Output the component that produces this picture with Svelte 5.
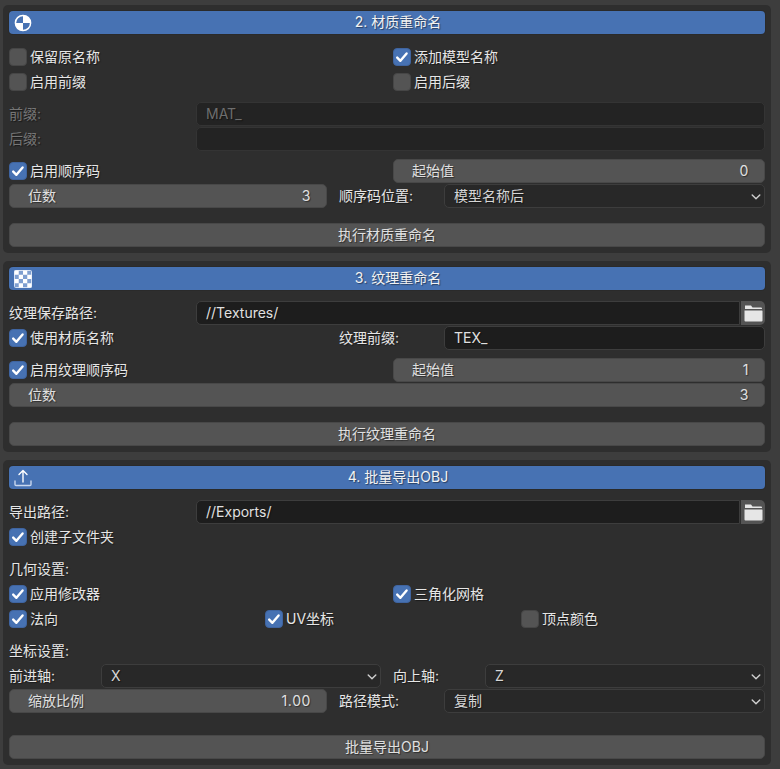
<script>
  const folderPath = "M3 1.5h6l1.5 2H19a1 1 0 0 1 1 1V5H3z M2.5 6.5H20a.5.5 0 0 1 .5.5v9.5a1 1 0 0 1-1 1h-16a1 1 0 0 1-1-1z";
  const checkerCells = [];
  for (let r = 0; r < 4; r++) {
    for (let c = 0; c < 4; c++) {
      if ((r + c) % 2 === 0) checkerCells.push({ x: 1.5 + c * 4.25, y: 1.5 + r * 4.25 });
    }
  }
</script>

{#snippet check(label, on = false)}
  <div class="check">
    <span class="box" class:on>
      {#if on}
        <svg width="18" height="18" viewBox="0 0 18 18"><path d="M4.2 9.6l3.2 3.2 6.2-7.4" fill="none" stroke="#fff" stroke-width="2.4" stroke-linecap="round" stroke-linejoin="round" /></svg>
      {/if}
    </span>
    <span>{label}</span>
  </div>
{/snippet}

{#snippet slider(label, value)}
  <div class="slider"><span>{label}</span><span class="value">{value}</span></div>
{/snippet}

{#snippet select(value)}
  <div class="select">
    <span>{value}</span>
    <svg width="10" height="6" viewBox="0 0 10 6"><path d="M1.2 1l3.8 3.8L8.8 1" fill="none" stroke="#d0d0d0" stroke-width="1.4" stroke-linecap="round" stroke-linejoin="round" /></svg>
  </div>
{/snippet}

{#snippet pathField(label, value)}
  <div class="row path-row">
    <span class="lbl">{label}</span>
    <div class="input path-input">{value}</div>
    <div class="folder">
      <svg width="22" height="18" viewBox="0 0 22 18"><path d={folderPath} fill="#e6e6e6" /></svg>
    </div>
  </div>
{/snippet}

<div class="page">
  <section class="panel">
    <div class="header">
      <svg class="icon" width="20" height="20" viewBox="0 0 20 20">
        <circle cx="10" cy="10" r="7.6" fill="none" stroke="#fff" stroke-width="1.5" />
        <path d="M10 2.4a7.6 7.6 0 0 1 7.6 7.6H10z M10 10v7.6A7.6 7.6 0 0 1 2.4 10z" fill="#fff" />
      </svg>
      <span>2. 材质重命名</span>
    </div>
    <div class="group first">
      <div class="row two">
        {@render check("保留原名称")}
        {@render check("添加模型名称", true)}
      </div>
      <div class="row two">
        {@render check("启用前缀")}
        {@render check("启用后缀")}
      </div>
    </div>
    <div class="group">
      <div class="row field-row">
        <span class="lbl faded">前缀:</span>
        <div class="input off">MAT_</div>
      </div>
      <div class="row field-row">
        <span class="lbl faded">后缀:</span>
        <div class="input off"></div>
      </div>
    </div>
    <div class="group">
      <div class="row two">
        {@render check("启用顺序码", true)}
        {@render slider("起始值", "0")}
      </div>
      <div class="row split">
        {@render slider("位数", "3")}
        <div class="labelled">
          <span class="lbl">顺序码位置:</span>
          {@render select("模型名称后")}
        </div>
      </div>
    </div>
    <div class="action">执行材质重命名</div>
  </section>

  <section class="panel">
    <div class="header">
      <svg class="icon" width="20" height="20" viewBox="0 0 20 20">
        <rect x="1.5" y="1.5" width="17" height="17" rx="1" fill="#7f9fd0" stroke="#d5e0f2" stroke-width="1" />
        {#each checkerCells as cell}
          <rect x={cell.x} y={cell.y} width="4.25" height="4.25" fill="#fff" />
        {/each}
      </svg>
      <span>3. 纹理重命名</span>
    </div>
    <div class="group first">
      {@render pathField("纹理保存路径:", "//Textures/")}
      <div class="row split">
        {@render check("使用材质名称", true)}
        <div class="labelled">
          <span class="lbl">纹理前缀:</span>
          <div class="input">TEX_</div>
        </div>
      </div>
    </div>
    <div class="group">
      <div class="row two">
        {@render check("启用纹理顺序码", true)}
        {@render slider("起始值", "1")}
      </div>
      <div class="row full">{@render slider("位数", "3")}</div>
    </div>
    <div class="action">执行纹理重命名</div>
  </section>

  <section class="panel">
    <div class="header">
      <svg class="icon" width="20" height="20" viewBox="0 0 20 20">
        <path d="M10 14V2.5M6 6.5l4-4 4 4" fill="none" stroke="#fff" stroke-width="1.4" stroke-linecap="round" stroke-linejoin="round" />
        <path d="M2 13v3.5a1 1 0 0 0 1 1h14a1 1 0 0 0 1-1V13" fill="none" stroke="#c9d8ef" stroke-width="1.4" stroke-linecap="round" />
      </svg>
      <span>4. 批量导出OBJ</span>
    </div>
    <div class="group first">
      {@render pathField("导出路径:", "//Exports/")}
      <div class="row">{@render check("创建子文件夹", true)}</div>
    </div>
    <div class="group">
      <div class="row"><span class="lbl">几何设置:</span></div>
      <div class="row two">
        {@render check("应用修改器", true)}
        {@render check("三角化网格", true)}
      </div>
      <div class="row three">
        {@render check("法向", true)}
        {@render check("UV坐标", true)}
        {@render check("顶点颜色")}
      </div>
    </div>
    <div class="group">
      <div class="row"><span class="lbl">坐标设置:</span></div>
      <div class="row two">
        <div class="axis">
          <span class="lbl">前进轴:</span>
          {@render select("X")}
        </div>
        <div class="axis">
          <span class="lbl">向上轴:</span>
          {@render select("Z")}
        </div>
      </div>
      <div class="row split">
        {@render slider("缩放比例", "1.00")}
        <div class="labelled">
          <span class="lbl">路径模式:</span>
          {@render select("复制")}
        </div>
      </div>
    </div>
    <div class="action last">批量导出OBJ</div>
  </section>
</div>

<style>
  :global(body) {
    background: #3d3d3d;
  }

  .page {
    width: 780px;
    height: 769px;
    box-sizing: border-box;
    padding: 5px 9px 4px 3px;
    display: flex;
    flex-direction: column;
    gap: 8px;
    background: #3d3d3d;
    color: #e6e6e6;
    font-family: Inter, "Noto Sans CJK SC", sans-serif;
    font-size: 14px;
    line-height: 20px;
    text-shadow: 1px 1px 1px rgba(0, 0, 0, 0.45);
    overflow: hidden;
  }

  .panel {
    background: #2e2e2e;
    border-radius: 5px;
    padding: 6px;
  }

  .header {
    position: relative;
    height: 23px;
    box-sizing: border-box;
    padding: 0 0 2px 22px;
    background: #4772b3;
    border-radius: 4px;
    box-shadow: 0 0 0 1px #2a2a2a;
    display: flex;
    align-items: center;
    justify-content: center;
    color: #f2f2f2;
  }

  .icon {
    position: absolute;
    left: 4px;
    top: 2px;
  }

  .group {
    display: flex;
    flex-direction: column;
    gap: 1px;
    margin-top: 8px;
  }

  .group.first {
    margin-top: 11px;
  }

  .row {
    height: 24px;
    display: flex;
    align-items: center;
  }

  .row.full {
    display: grid;
  }

  .two,
  .three,
  .split {
    display: grid;
    column-gap: 12px;
  }

  .two {
    grid-template-columns: 372px 372px;
  }

  .three {
    grid-template-columns: 244px 244px 244px;
  }

  .split {
    grid-template-columns: 318px 426px;
    width: 756px;
  }

  .field-row {
    display: grid;
    grid-template-columns: 187px 569px;
  }

  .path-row {
    display: grid;
    grid-template-columns: 187px 544px 25px;
  }

  .labelled {
    display: grid;
    grid-template-columns: 105px 321px;
    align-items: center;
  }

  .axis {
    display: grid;
    grid-template-columns: 92px 280px;
    align-items: center;
  }

  .lbl {
    white-space: nowrap;
  }

  .faded {
    color: #767676;
  }

  .check {
    display: flex;
    align-items: center;
    gap: 3px;
    white-space: nowrap;
  }

  .box {
    width: 18px;
    height: 18px;
    box-sizing: border-box;
    display: block;
    border-radius: 4px;
    background: #545454;
    border: 1px solid #464646;
  }

  .box.on {
    background: #4772b3;
    border-color: #3f64a0;
  }

  .box svg {
    display: block;
    margin: -1px;
  }

  .slider,
  .select,
  .input,
  .action {
    height: 24px;
    box-sizing: border-box;
    border-radius: 5px;
    border: 1px solid #3d3d3d;
    display: flex;
    align-items: center;
  }

  .slider {
    background: #545454;
    border-color: #484848;
    justify-content: space-between;
    padding-left: 18px;
    padding-right: 15px;
    color: #e0e0e0;
  }

  .value {
    letter-spacing: 0.6px;
  }

  .select {
    background: #282828;
    justify-content: space-between;
    padding-left: 9px;
    padding-right: 3px;
    color: #d6d6d6;
  }

  .select svg {
    margin-top: 2px;
  }

  .input {
    background: #1d1d1d;
    padding-left: 9px;
    padding-right: 9px;
    color: #e0e0e0;
  }

  .input.off {
    background: #232323;
    border-color: #343434;
    color: #6e6e6e;
  }

  .path-input {
    border-radius: 5px 0 0 5px;
  }

  .folder {
    height: 24px;
    background: #545454;
    border-radius: 0 5px 5px 0;
    display: flex;
    align-items: center;
    justify-content: center;
    margin-left: 1px;
  }

  .action {
    margin-top: 15px;
    background: #545454;
    border-color: #484848;
    justify-content: center;
    color: #e0e0e0;
  }

  .action.last {
    margin-top: 22px;
  }
</style>
